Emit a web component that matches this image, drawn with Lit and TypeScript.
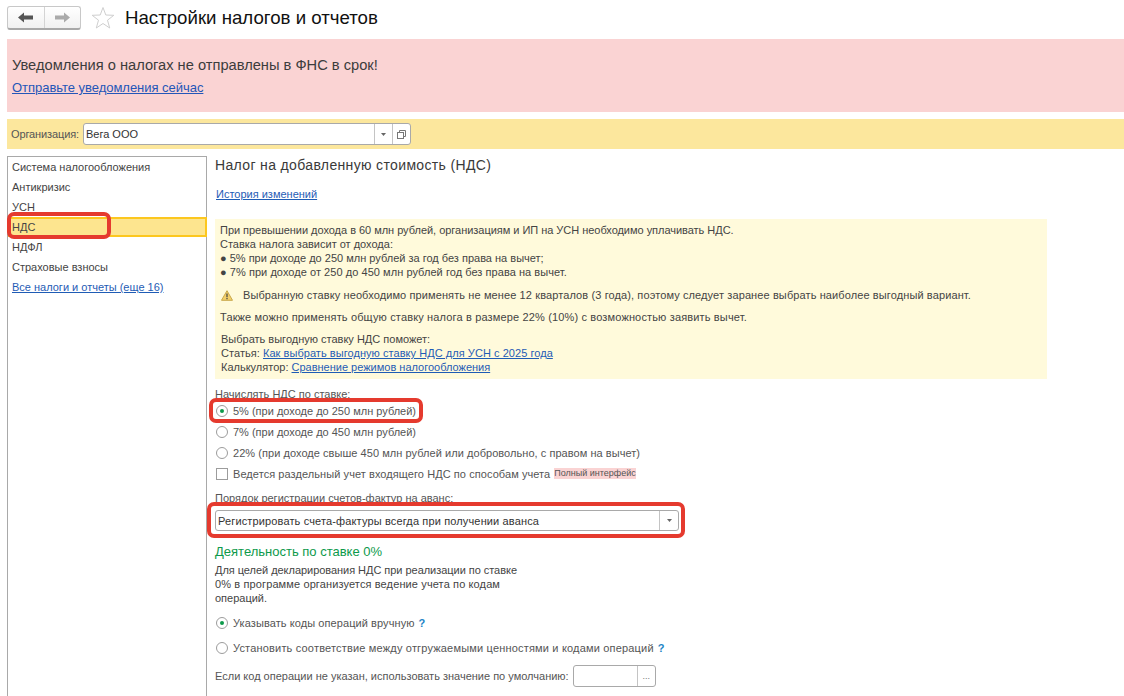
import { LitElement, html, css } from "lit";
import { customElement } from "lit/decorators.js";

const arrow = (dir: "l" | "r", color: string) => html`<svg width="15" height="11" viewBox="0 0 15 11">
  <path d="${dir === "l" ? "M0 5.5 L6 .5 V3.5 H15 V7.5 H6 V10.5 Z" : "M15 5.5 L9 .5 V3.5 H0 V7.5 H9 V10.5 Z"}" fill="${color}"/></svg>`;

const caret = html`<svg width="5" height="3" viewBox="0 0 5 3"><path d="M0 0H5L2.5 3Z" fill="#666"/></svg>`;

@customElement("app-root")
export class AppRoot extends LitElement {
  static styles = css`
    :host { display: block; width: 1124px; height: 696px; overflow: hidden; position: relative; background: #fff;
      font-family: "Liberation Sans", Arial, sans-serif; font-size: 11px; color: #4b4b4b; }
    a { color: #1f5cb5; text-decoration: underline; }
    .top { display: flex; align-items: center; height: 35px; margin-bottom: 4px; padding-left: 7px; box-sizing: border-box; }
    .nav { display: flex; width: 74px; height: 24px; box-sizing: border-box; border: 1px solid #c8c8c8; border-bottom: 2px solid #a8a8a8; border-radius: 3px; background: linear-gradient(#fff, #f1f1f1); }
    .nav span { flex: 1; display: flex; align-items: center; justify-content: center; }
    .nav span + span { border-left: 1px solid #d4d4d4; }
    .star { margin-left: 10px; display: block; }
    h1 { margin: 1px 0 0 10px; font-size: 18.67px; font-weight: 400; color: #111; }
    .alert { margin-left: 7px; height: 73px; background: #fad3d3; box-sizing: border-box; padding: 17px 0 0 5px; }
    .alert p { margin: 0; font-size: 14.67px; line-height: 18px; color: #3c3c3c; }
    .alert a { display: block; margin-top: 6px; font-size: 13px; line-height: 16px; color: #2456b8; letter-spacing: -0.03px; }
    .org { margin: 7px 0 0 7px; height: 30px; background: #fce79d; display: flex; align-items: center; padding-left: 4px; gap: 4px; color: #555; }
    .org > span { letter-spacing: -0.12px; }
    .field { display: flex; background: #fff; border: 1px solid #a9a9a9; border-radius: 3px; box-sizing: border-box; color: #333; align-items: stretch; }
    .field .v { flex: 1; padding-left: 2px; display: flex; align-items: center; }
    .field .b { width: 17px; border-left: 1px solid #c4c4c4; display: flex; align-items: center; justify-content: center; }
    .orgf { width: 328px; height: 22px; }
    .main { display: flex; margin: 7px 0 0 7px; }
    .side { width: 200px; height: 540px; box-sizing: border-box; border: 1px solid #a9a9a9; border-bottom: 0; flex: none; }
    .side div { height: 20px; line-height: 20px; padding-left: 4px; color: #444; box-sizing: border-box; }
    .side .sel { background: #fde58f; border: 2px solid #fcc71f; border-left: 0; line-height: 16px; margin-right: -1px; }
    .content { margin-left: 8px; flex: 1; }
    h2 { margin: 0; font-size: 14px; font-weight: 400; line-height: 18px; color: #3a3a3a; letter-spacing: 0.35px; }
    .hist { display: block; margin: 13px 0 0 1px; line-height: 14px; }
    .note { margin-top: 18px; width: 832px; height: 160px; background: #fffadb; box-sizing: border-box; padding: 4px 0 0 5px; line-height: 14px; color: #444; }
    .warn { display: flex; align-items: center; margin-top: 9px; height: 14px; }
    .warn svg { margin-right: 10px; margin-left: 1px; }
    .gap { margin-top: 8px; }
    .ind { padding-left: 1px; }
    .lab { margin-top: 9px; line-height: 12px; color: #555; }
    .opt { display: flex; align-items: center; height: 21px; gap: 5px; color: #555; }
    .radio { width: 10px; height: 10px; border: 1px solid #9c9c9c; border-radius: 50%; background: #fff; display: flex; align-items: center; justify-content: center; flex: none; margin-left: 1px; }
    .radio.on::after { content: ""; width: 4px; height: 4px; border-radius: 50%; background: #0d9a4b; }
    .check { width: 10px; height: 10px; border: 1px solid #9c9c9c; margin-left: 1px; flex: none; }
    .tag { background: #fad3d3; font-size: 9px; color: #555; line-height: 11px; margin-left: -1px; }
    .lab2 { margin-top: 7px; line-height: 14px; color: #555; }
    .sel2 { margin-top: 5px; width: 464px; height: 21px; }
    .sel2 .b { width: 18px; }
    h3 { margin: 13px 0 0; font-size: 13px; font-weight: 400; line-height: 15px; color: #0d9a4b; }
    .para { margin-top: 4px; line-height: 14px; color: #444; width: 330px; }
    .o2 { margin-top: 5px; height: 25px; }
    .o3 { height: 25px; }
    .q { color: #1d84c6; font-weight: 700; margin-left: -1px; }
    .def { display: flex; align-items: center; margin-top: 5px; color: #555; }
    .deff { width: 83px; height: 22px; margin-left: 4px; }
    .deff .b { color: #777; font-size: 9px; }
    .mark { position: absolute; box-sizing: border-box; border: 4px solid #e53a2e; border-radius: 7px; pointer-events: none; }
    .m1 { left: 7px; top: 212px; width: 104px; height: 27px; }
    .m2 { left: 209px; top: 398px; width: 214px; height: 25px; }
    .m3 { left: 207px; top: 502px; width: 478px; height: 36px; }
    .t-n03 { letter-spacing: -0.03px; }
    .t-n04 { letter-spacing: -0.04px; }
    .t-05 { letter-spacing: 0.05px; }
    .t-07 { letter-spacing: 0.07px; }
    .t-08 { letter-spacing: 0.08px; }
    .t-11 { letter-spacing: 0.11px; }
    .t-12 { letter-spacing: 0.12px; }
    .t-14 { letter-spacing: 0.14px; }
    .t-15 { letter-spacing: 0.15px; }
    .t-18 { letter-spacing: 0.18px; }
  `;

  render() {
    return html`
      <div class="top">
        <div class="nav"><span>${arrow("l", "#555")}</span><span>${arrow("r", "#aaa")}</span></div>
        <svg class="star" width="24" height="24" viewBox="0 0 24 24"><path d="M12 1.5 L14.8 9 L22.8 9.3 L16.5 14.2 L18.7 22 L12 17.5 L5.3 22 L7.5 14.2 L1.2 9.3 L9.2 9 Z" fill="#fff" stroke="#cfcfcf"/></svg>
        <h1>Настройки налогов и отчетов</h1>
      </div>
      <div class="alert">
        <p>Уведомления о налогах не отправлены в ФНС в срок!</p>
        <a href="#">Отправьте уведомления сейчас</a>
      </div>
      <div class="org">
        <span>Организация:</span>
        <div class="field orgf">
          <div class="v">Вега ООО</div>
          <div class="b">${caret}</div>
          <div class="b"><svg width="9" height="9" viewBox="0 0 9 9" fill="none" stroke="#777"><path d="M2.5 2.5V.5H8.5V6.5H6.5"/><rect x=".5" y="2.5" width="6" height="6"/></svg></div>
        </div>
      </div>
      <div class="main">
        <div class="side">
          <div>Система налогообложения</div>
          <div>Антикризис</div>
          <div>УСН</div>
          <div class="sel">НДС</div>
          <div>НДФЛ</div>
          <div>Страховые взносы</div>
          <div><a href="#">Все налоги и отчеты (еще 16)</a></div>
        </div>
        <div class="content">
          <h2>Налог на добавленную стоимость (НДС)</h2>
          <a class="hist" href="#">История изменений</a>
          <div class="note">
            <div class="t-n03">При превышении дохода в 60 млн рублей, организациям и ИП на УСН необходимо уплачивать НДС.</div>
            <div>Ставка налога зависит от дохода:</div>
            <div>● 5% при доходе до 250 млн рублей за год без права на вычет;</div>
            <div class="t-05">● 7% при доходе от 250 до 450 млн рублей год без права на вычет.</div>
            <div class="warn">
              <svg width="12" height="11" viewBox="0 0 12 11"><path d="M6 .7 L11.5 10.3 H.5 Z" fill="#f3cf6b" stroke="#c9a84c" stroke-linejoin="round"/><path d="M6 3.5V7.2M6 8V9.3" stroke="#444" stroke-width="1.2"/></svg>
              <span class="t-11">Выбранную ставку необходимо применять не менее 12 кварталов (3 года), поэтому следует заранее выбрать наиболее выгодный вариант.</span>
            </div>
            <div class="gap t-15">Также можно применять общую ставку налога в размере 22% (10%) с возможностью заявить вычет.</div>
            <div class="gap ind">Выбрать выгодную ставку НДС поможет:</div>
            <div class="ind t-05">Статья: <a href="#">Как выбрать выгодную ставку НДС для УСН с 2025 года</a></div>
            <div class="ind">Калькулятор: <a href="#">Сравнение режимов налогообложения</a></div>
          </div>
          <div class="lab">Начислять НДС по ставке:</div>
          <div class="opt"><span class="radio on"></span>5% (при доходе до 250 млн рублей)</div>
          <div class="opt"><span class="radio"></span>7% (при доходе до 450 млн рублей)</div>
          <div class="opt"><span class="radio"></span><span class="t-05">22% (при доходе свыше 450 млн рублей или добровольно, с правом на вычет)</span></div>
          <div class="opt"><span class="check"></span><span class="t-07">Ведется раздельный учет входящего НДС по способам учета</span> <span class="tag">Полный интерфейс</span></div>
          <div class="lab2">Порядок регистрации счетов-фактур на аванс:</div>
          <div class="field sel2"><div class="v t-14">Регистрировать счета-фактуры всегда при получении аванса</div><div class="b">${caret}</div></div>
          <h3>Деятельность по ставке 0%</h3>
          <div class="para"><span class="t-n04">Для целей декларирования НДС при реализации по ставке</span><br><span class="t-12">0% в программе организуется ведение учета по кодам</span><br>операций.</div>
          <div class="opt o2"><span class="radio on"></span><span class="t-08">Указывать коды операций вручную</span> <span class="q">?</span></div>
          <div class="opt o3"><span class="radio"></span><span class="t-18">Установить соответствие между отгружаемыми ценностями и кодами операций</span> <span class="q">?</span></div>
          <div class="def"><span>Если код операции не указан, использовать значение по умолчанию:</span><div class="field deff"><div class="v"></div><div class="b">...</div></div></div>
        </div>
      </div>
      <div class="mark m1"></div>
      <div class="mark m2"></div>
      <div class="mark m3"></div>
    `;
  }
}
